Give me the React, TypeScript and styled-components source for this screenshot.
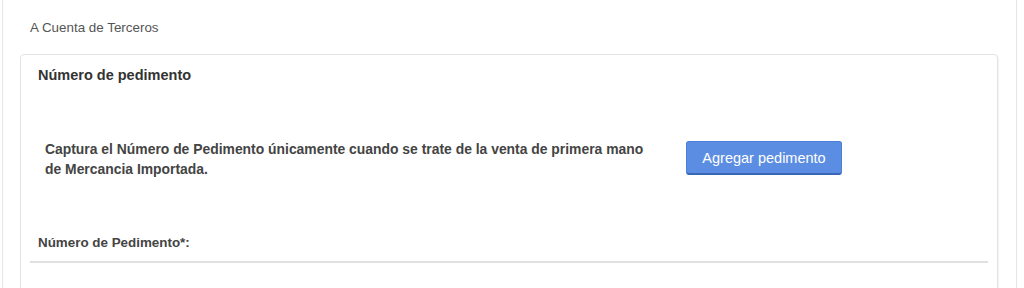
import styled, { createGlobalStyle } from "styled-components";

const GlobalStyle = createGlobalStyle`
  html, body {
    margin: 0;
    padding: 0;
    background: #ffffff;
    font-family: "Liberation Sans", Arial, sans-serif;
  }
`;

const Page = styled.div`
  padding: 0 7px 0 2px;
  height: 288px;
  overflow: hidden;
`;

const Frame = styled.div`
  border-left: 1px solid #e6e6e6;
  border-right: 1px solid #e6e6e6;
  height: 100%;
  padding: 19px 18px 0 17px;
  box-sizing: border-box;
`;

const Title = styled.div`
  font-size: 13.4px;
  line-height: 17px;
  color: #555555;
  padding-left: 10px;
`;

const Card = styled.div`
  margin-top: 18px;
  border: 1px solid #e3e3e3;
  border-radius: 4px;
  box-shadow: 1px 1px 1px rgba(0, 0, 0, 0.05);
  height: 300px;
`;

const CardHeading = styled.div`
  font-size: 14.5px;
  font-weight: bold;
  color: #333333;
  line-height: 18px;
  padding: 11px 17px;
`;

const Notice = styled.div`
  display: flex;
  align-items: flex-start;
  margin-top: 44px;
  padding-left: 24px;
`;

const NoticeText = styled.p`
  margin: 0;
  width: 620px;
  padding-right: 16px;
  box-sizing: border-box;
  font-size: 13.9px;
  font-weight: bold;
  line-height: 20px;
  color: #444444;
`;

const AddButton = styled.button`
  margin-left: 21px;
  margin-top: 2px;
  width: 156px;
  height: 34px;
  border: 1px solid #4a7fd6;
  border-bottom: 2px solid #3a66b8;
  border-radius: 3px;
  background: #5b8ee2;
  color: #ffffff;
  font-family: "Liberation Sans", Arial, sans-serif;
  font-size: 14.5px;
  cursor: pointer;
`;

const Field = styled.div`
  margin-top: 55px;
  padding: 0 9px;
`;

const FieldLabel = styled.label`
  display: block;
  padding-left: 8px;
  font-size: 13.4px;
  font-weight: bold;
  color: #444444;
  line-height: 17px;
`;

const FieldLine = styled.div`
  margin-top: 10px;
  height: 2px;
  background: #e0e0e0;
`;

export default function App() {
  return (
    <>
      <GlobalStyle />
      <Page>
        <Frame>
          <Title>A Cuenta de Terceros</Title>
          <Card>
            <CardHeading>Número de pedimento</CardHeading>
            <Notice>
              <NoticeText>
                Captura el Número de Pedimento únicamente cuando se trate de la
                venta de primera mano de Mercancia Importada.
              </NoticeText>
              <AddButton>Agregar pedimento</AddButton>
            </Notice>
            <Field>
              <FieldLabel>Número de Pedimento*:</FieldLabel>
              <FieldLine />
            </Field>
          </Card>
        </Frame>
      </Page>
    </>
  );
}
